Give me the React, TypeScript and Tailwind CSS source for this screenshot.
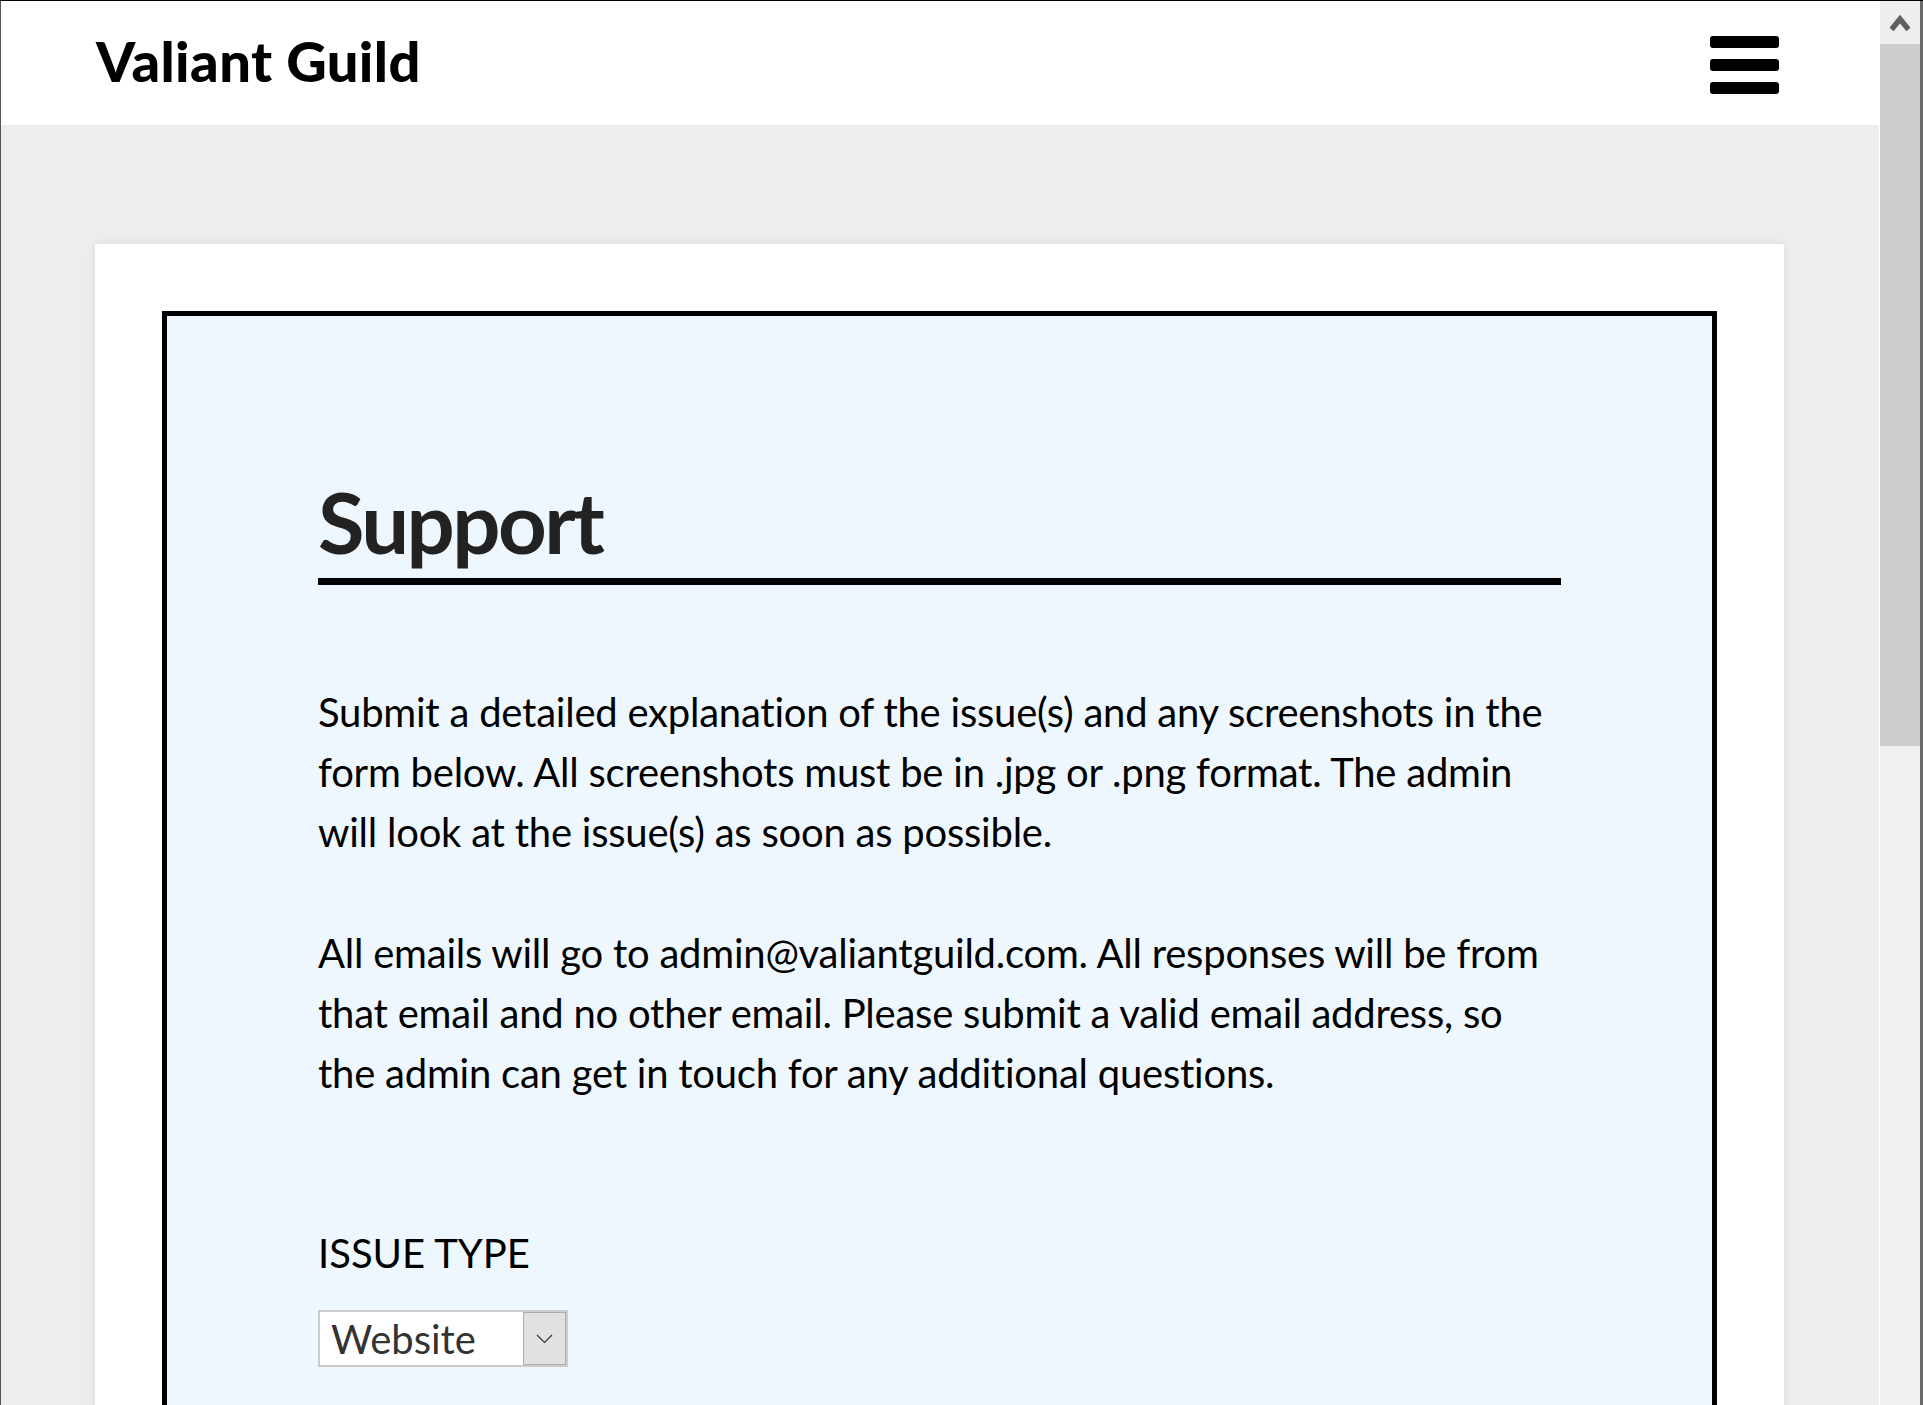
import { useState } from 'react';

const FONT = "font-['Lato','Noto_Sans',sans-serif]";

function Hamburger() {
  return (
    <button type="button" className="flex flex-col gap-[11px] mt-[3px]" aria-label="Menu">
      <span className="block w-[69px] h-[12px] rounded-[3px] bg-black" />
      <span className="block w-[69px] h-[12px] rounded-[3px] bg-black" />
      <span className="block w-[69px] h-[12px] rounded-[3px] bg-black" />
    </button>
  );
}

function FakeScrollbar() {
  return (
    <div className="w-[44px] shrink-0 flex h-full">
      <div className="w-[41px] flex flex-col bg-[#f0f0f0] border-l border-white">
        <div className="h-[43px] bg-[#eeeeee] flex items-center justify-center">
          <svg width="20" height="18" viewBox="0 0 20 18">
            <path d="M1.5 15.5 L10 5 L18.5 15.5" fill="none" stroke="#606060" strokeWidth="5.5" strokeLinejoin="miter" />
          </svg>
        </div>
        <div className="h-[702px] bg-[#cdcdcd]" />
        <div className="flex-1 bg-[#f0f0f0]" />
      </div>
      <div className="w-[3px] bg-[#6a6a6a]" />
    </div>
  );
}

function IssueSelect() {
  const [value] = useState('Website');
  return (
    <div className="mt-[27px] w-[250px] h-[57px] border-2 border-[#cccccc] bg-white flex items-stretch">
      <div className="flex-1 flex items-center pl-[11px] text-[40px] leading-none text-[#333333] pt-[1px]">
        {value}
      </div>
      <div className="w-[43px] bg-[#e1e1e1] border border-[#adadad] flex items-center justify-center">
        <svg width="17" height="10" viewBox="0 0 17 10">
          <path d="M1 1 L8.5 8.5 L16 1" fill="none" stroke="#333" strokeWidth="1.2" />
        </svg>
      </div>
    </div>
  );
}

export default function App() {
  return (
    <div className={`${FONT} h-[1405px] w-full flex overflow-hidden border-t border-l border-t-black border-l-[#555]`}>
      <div className="flex-1 flex flex-col bg-[#ededed] min-w-0">
        <header className="h-[124px] bg-white flex items-center justify-between pl-[95px] pr-[100px] shrink-0">
          <h1 className="text-[56px] font-black leading-[1.2] tracking-[0.4px] text-black mt-[-4px]">Valiant Guild</h1>
          <Hamburger />
        </header>

        <main className="pt-[119px] pl-[94px] pr-[95px]">
          <div className="bg-white rounded-[3px] shadow-[0_0_10px_rgba(0,0,0,0.08)] px-[67px] pt-[67px]">
            <div className="border-[5px] border-b-0 border-black bg-[#eff7fe] px-[151px] pt-[154px] pb-[200px]">
              <h2 className="text-[85px] font-bold leading-[1.2] tracking-[-2.6px] text-[#222222] pb-[6px] border-b-[7px] border-black">
                Support
              </h2>

              <div className="mt-[97px] text-[40px] leading-[60px] tracking-[-0.23px] text-black">
                <p className="mb-[61px]">
                  Submit a detailed explanation of the issue(s) and any screenshots in the form below. All
                  screenshots must be in .jpg or .png format. The admin will look at the issue(s) as soon as
                  possible.
                </p>
                <p>
                  All emails will go to admin@valiantguild.com. All responses will be from that email and no
                  other email. Please submit a valid email address, so the admin can get in touch for any
                  additional questions.
                </p>
              </div>

              <form className="mt-[120px]" onSubmit={(e) => e.preventDefault()}>
                <label className="block text-[40px] leading-[60px] text-black uppercase">Issue Type</label>
                <IssueSelect />
              </form>
            </div>
          </div>
        </main>
      </div>
      <FakeScrollbar />
    </div>
  );
}
